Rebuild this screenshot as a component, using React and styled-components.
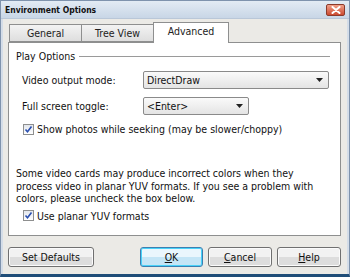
import React from "react";
import styled, { createGlobalStyle } from "styled-components";

const GlobalStyle = createGlobalStyle`
  html, body {
    margin: 0;
    padding: 0;
    background: #ffffff;
  }
  * {
    box-sizing: border-box;
  }
`;

const FONT = `"DejaVu Sans Condensed", "DejaVu Sans", Verdana, sans-serif`;

const App = () => {
  const tabs = ["General", "Tree View", "Advanced"];
  const active = "Advanced";

  return (
    <>
      <GlobalStyle />
      <Window>
        <TitleBar>
          <Title>Environment Options</Title>
          <CloseButton>
            <svg width="10" height="8" viewBox="0 0 10 8">
              <path
                d="M1.5 1 L8.5 7 M8.5 1 L1.5 7"
                stroke="#ffffff"
                strokeWidth="2"
                strokeLinecap="round"
              />
            </svg>
          </CloseButton>
        </TitleBar>
        <Body>
          <TabRow>
            {tabs.map((t) => (
              <Tab key={t} active={t === active}>
                {t}
              </Tab>
            ))}
          </TabRow>
          <Panel>
            <GroupHead>
              <span>Play Options</span>
              <Rule />
            </GroupHead>
            <FieldRow>
              <Label>Video output mode:</Label>
              <Select width="186px">
                <span>DirectDraw</span>
                <Arrow />
              </Select>
            </FieldRow>
            <FieldRow>
              <Label>Full screen toggle:</Label>
              <Select width="106px">
                <span>&lt;Enter&gt;</span>
                <Arrow />
              </Select>
            </FieldRow>
            <CheckRow gap="8px">
              <CheckBox checked />
              <span>Show photos while seeking (may be slower/choppy)</span>
            </CheckRow>
            <Note>
              Some video cards may produce incorrect colors when they process
              video in planar YUV formats. If you see a problem with colors,
              please uncheck the box below.
            </Note>
            <CheckRow gap="5px">
              <CheckBox checked />
              <span>Use planar YUV formats</span>
            </CheckRow>
          </Panel>
          <ButtonRow>
            <Button width="86px">Set Defaults</Button>
            <Spacer />
            <Button width="63px" focused>
              <u>O</u>K
            </Button>
            <Button width="64px">
              <u>C</u>ancel
            </Button>
            <Button width="64px">
              <u>H</u>elp
            </Button>
          </ButtonRow>
        </Body>
      </Window>
    </>
  );
};

const CheckBox = ({ checked }) => (
  <Box>
    {checked && (
      <svg width="9" height="9" viewBox="0 0 9 9">
        <path
          d="M1.5 4.5 L3.5 6.8 L7.5 1.5"
          fill="none"
          stroke="#2a4fb0"
          strokeWidth="1.6"
        />
      </svg>
    )}
  </Box>
);

const Arrow = () => (
  <svg width="7" height="4" viewBox="0 0 7 4">
    <path d="M0 0 H7 L3.5 4 Z" fill="#222" />
  </svg>
);

const Window = styled.div`
  width: 350px;
  height: 277px;
  display: flex;
  flex-direction: column;
  background: #ebeae6;
  border: 1px solid #7f93ad;
  border-bottom: 3px solid #1f4d78;
  font-family: ${FONT};
  font-size: 10.5px;
  color: #111;
`;

const TitleBar = styled.div`
  height: 18px;
  display: flex;
  align-items: center;
  justify-content: space-between;
  padding: 0 4px 0 4px;
  background: linear-gradient(#e3ebf4, #c8d6e6);
  border-bottom: 1px solid #b9c7d8;
`;

const Title = styled.div`
  font-weight: bold;
  font-size: 8.5px;
  color: #111;
`;

const CloseButton = styled.div`
  width: 19px;
  height: 12px;
  display: flex;
  align-items: center;
  justify-content: center;
  border: 1px solid #8b3a2b;
  border-radius: 2px;
  background: linear-gradient(#f0a08a, #cc4a30);
`;

const Body = styled.div`
  flex: 1;
  display: flex;
  flex-direction: column;
  padding: 4px 6px 0 5px;
  border-left: 2px solid #d4dde8;
  border-right: 2px solid #d4dde8;
`;

const TabRow = styled.div`
  display: flex;
  align-items: flex-end;
  height: 19px;
  padding-left: 1px;
  position: relative;
  z-index: 1;
`;

const Tab = styled.div`
  width: ${(p) => (p.active ? "76px" : "73px")};
  height: ${(p) => (p.active ? "21px" : "18px")};
  margin-bottom: ${(p) => (p.active ? "-1px" : "0")};
  display: flex;
  align-items: center;
  justify-content: center;
  padding-bottom: ${(p) => (p.active ? "4px" : "0")};
  border: 1px solid #8e8f8f;
  border-bottom: ${(p) => (p.active ? "none" : "1px solid #8e8f8f")};
  margin-right: -1px;
  background: ${(p) =>
    p.active ? "#ffffff" : "linear-gradient(#f3f3f3, #dedede)"};
  color: #222;
`;

const Panel = styled.div`
  height: 194px;
  background: #ffffff;
  border: 1px solid #8e8f8f;
  padding: 6px 10px 0 7px;
  display: flex;
  flex-direction: column;
`;

const GroupHead = styled.div`
  display: flex;
  align-items: center;
  gap: 4px;
  height: 14px;
`;

const Rule = styled.div`
  flex: 1;
  height: 1px;
  background: #9a9a9a;
`;

const FieldRow = styled.div`
  display: flex;
  align-items: center;
  padding-left: 6px;
  margin-top: 8px;
  height: 18px;
`;

const Label = styled.div`
  width: 121px;
`;

const Select = styled.div`
  width: ${(p) => p.width};
  height: 18px;
  display: flex;
  align-items: center;
  justify-content: space-between;
  padding: 0 5px 0 3px;
  border: 1px solid #8a8a8a;
  border-radius: 2px;
  background: linear-gradient(#fafafa, #e4e4e4);
`;

const CheckRow = styled.div`
  display: flex;
  align-items: center;
  gap: 3px;
  padding-left: 7px;
  margin-top: ${(p) => p.gap};
  height: 12px;
`;

const Box = styled.div`
  width: 11px;
  height: 11px;
  border: 1px solid #8e8f8f;
  background: linear-gradient(#e2e6ec, #ffffff);
  display: flex;
  align-items: center;
  justify-content: center;
`;

const Note = styled.div`
  margin-top: 32px;
  line-height: 12.5px;
  padding-right: 2px;
`;

const ButtonRow = styled.div`
  display: flex;
  gap: 5px;
  margin-top: 11px;
`;

const Spacer = styled.div`
  flex: 1;
`;

const Button = styled.div`
  width: ${(p) => p.width};
  height: 20px;
  display: flex;
  align-items: center;
  justify-content: center;
  border: 1px solid ${(p) => (p.focused ? "#3c7fb1" : "#707070")};
  border-radius: 3px;
  box-shadow: inset 0 0 0 1px
    ${(p) => (p.focused ? "#48d2f9" : "#fbfbfb")};
  background: ${(p) =>
    p.focused
      ? "linear-gradient(#eaf6fd 50%, #c4e5f6 50%)"
      : "linear-gradient(#f2f2f2 50%, #dddddd 50%)"};
  color: #111;
`;

export default App;
